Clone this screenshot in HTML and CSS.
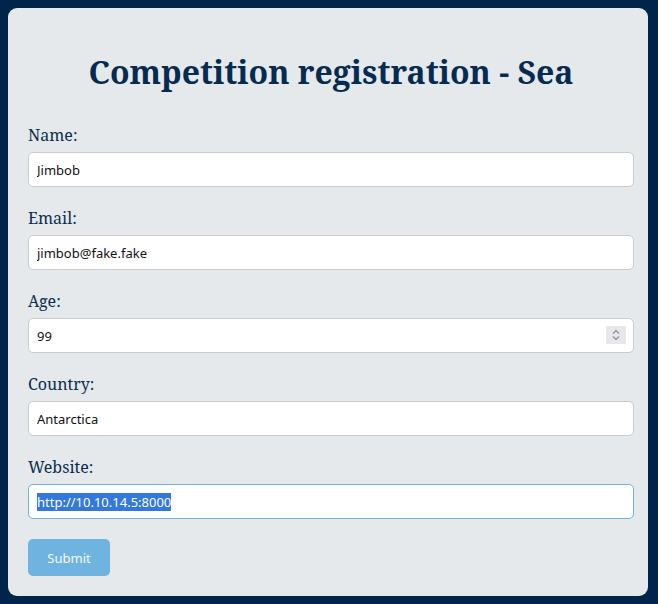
FILE: index.html
```html
<!DOCTYPE html>
<html>
<head>
<meta charset="utf-8">
<link rel="stylesheet" href="styles.css">
</head>
<body>
<main class="card">
  <h1 class="title">Competition registration - Sea</h1>
  <form class="form">
    <div class="field">
      <label class="label">Name:</label>
      <input class="input" type="text" value="Jimbob">
    </div>
    <div class="field">
      <label class="label">Email:</label>
      <input class="input" type="text" value="jimbob@fake.fake">
    </div>
    <div class="field">
      <label class="label">Age:</label>
      <div class="num-wrap">
        <input class="input" type="text" value="99">
        <span class="spinner">
          <svg width="20" height="18" viewBox="0 0 20 18"><path d="M7 7.5 L10 4.5 L13 7.5 M7 10.5 L10 13.5 L13 10.5" fill="none" stroke="#8a8a92" stroke-width="1.2"/></svg>
        </span>
      </div>
    </div>
    <div class="field">
      <label class="label">Country:</label>
      <input class="input" type="text" value="Antarctica">
    </div>
    <div class="field">
      <label class="label">Website:</label>
      <div class="input focus"><span class="sel">http://10.10.14.5:8000</span></div>
    </div>
    <button class="submit" type="button">Submit</button>
  </form>
</main>
</body>
</html>
```
FILE: styles.css
```css
html, body {
  margin: 0;
  padding: 0;
}
body {
  background: #00244a;
  padding: 8px 10px 8px 8px;
  font-family: "Noto Serif", "DejaVu Serif", serif;
}
.card {
  background: #e5e9ec;
  border-radius: 9px;
  padding: 20px 14px 20px 20px;
  min-height: 548px;
}
.title {
  margin: 22px 0 29px;
  text-align: center;
  font-size: 32px;
  font-weight: 700;
  color: #062b50;
  line-height: 44px;
}
.form {
  display: flex;
  flex-direction: column;
}
.field {
  display: flex;
  flex-direction: column;
  gap: 5px;
  margin-bottom: 19px;
}
.label {
  font-size: 16px;
  line-height: 24px;
  color: #0b2d4e;
}
.input {
  box-sizing: border-box;
  width: 100%;
  height: 35px;
  border: 1px solid #c9cbcd;
  border-radius: 5px;
  background: #fff;
  padding: 0 8px;
  font-family: "Noto Sans", "Open Sans", sans-serif;
  font-size: 13px;
  color: #111;
  outline: none;
}
div.input {
  display: flex;
  align-items: center;
}
.focus {
  border-color: #6fb4e6;
}
.sel {
  background: #3279d9;
  color: #fff;
  line-height: 18px;
}
.num-wrap {
  position: relative;
}
.spinner {
  position: absolute;
  right: 8px;
  top: 8px;
  width: 20px;
  height: 18px;
  background: #e8e8ec;
  display: block;
}
.spinner svg {
  display: block;
}
.submit {
  margin-top: 1px;
  align-self: flex-start;
  width: 82px;
  height: 37px;
  border: none;
  border-radius: 5px;
  background: #6fb4e1;
  color: #f4f8fb;
  font-family: "Noto Sans", "Open Sans", sans-serif;
  font-size: 13px;
}
```
